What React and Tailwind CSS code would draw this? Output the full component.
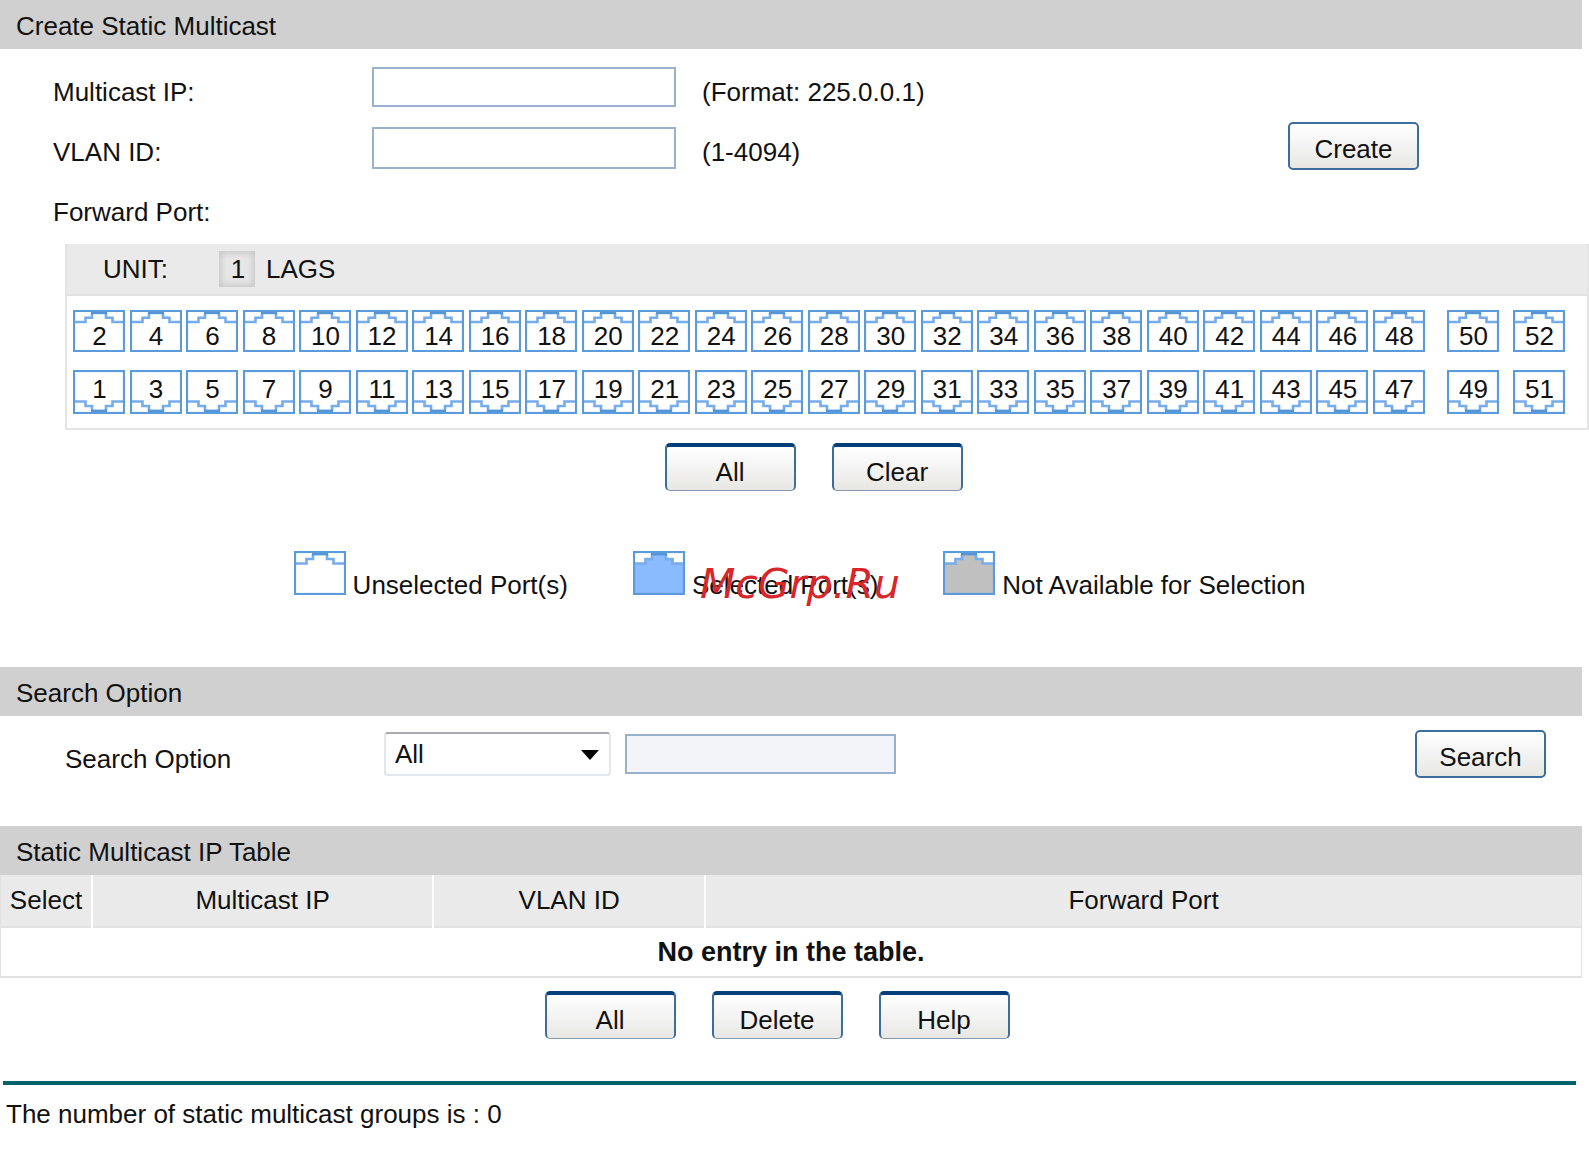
import React, { useState } from 'react';

const EVEN_PORTS = Array.from({ length: 24 }, (_, i) => (i + 1) * 2);
const ODD_PORTS = Array.from({ length: 24 }, (_, i) => i * 2 + 1);

const PORT_FILL = {
  unselected: '#ffffff',
  selected: '#8abaff',
  disabled: '#c0c0c0',
};

const PortShape = ({ state = 'unselected', flipped = false, className = '' }) => (
  <svg
    viewBox="0 0 52 44"
    preserveAspectRatio="none"
    aria-hidden="true"
    className={`${className} ${flipped ? '-scale-y-100' : ''}`}
  >
    <rect x="1" y="1" width="50" height="42" fill="#ffffff" />
    <path d="M1 12H12V8H19V3H33V8H40V12H51V43H1Z" fill={PORT_FILL[state]} />
    <path d="M2 12.5H12.5V8H19V3M50 12.5H39.5V8H33V3" fill="none" stroke="#76acea" strokeWidth="2.6" />
    <rect x="18" y="1" width="16" height="3.4" fill="#5495d6" />
    <rect x="1" y="1" width="50" height="42" fill="none" stroke="#5b9bdb" strokeWidth="2.2" />
  </svg>
);

const Port = ({ number, bottom, selected, onToggle, className = '' }) => (
  <button
    type="button"
    aria-pressed={selected}
    onClick={() => onToggle(number)}
    className={`relative flex w-[52px] shrink-0 justify-center pl-[1px] leading-[30px] ${
      bottom ? 'h-[44px] items-start pt-[4px]' : 'h-[42px] items-end pb-[1px]'
    } ${className}`}
  >
    <PortShape
      state={selected ? 'selected' : 'unselected'}
      flipped={bottom}
      className="absolute inset-0 h-full w-full"
    />
    <span className="relative">{number}</span>
  </button>
);

const PortRow = ({ ports, uplinks, bottom, selectedPorts, onToggle }) => (
  <div className="flex">
    <div className="flex flex-1 justify-between">
      {ports.map((n) => (
        <Port key={n} number={n} bottom={bottom} selected={selectedPorts.includes(n)} onToggle={onToggle} />
      ))}
    </div>
    <Port
      number={uplinks[0]}
      bottom={bottom}
      selected={selectedPorts.includes(uplinks[0])}
      onToggle={onToggle}
      className="ml-[22px]"
    />
    <Port
      number={uplinks[1]}
      bottom={bottom}
      selected={selectedPorts.includes(uplinks[1])}
      onToggle={onToggle}
      className="ml-[14px]"
    />
  </div>
);

const SectionTitle = ({ children }) => (
  <h2 className="mr-[7px] bg-[#d0d0d0] pt-[3px] pl-[16px] text-[26px] leading-[46px]">{children}</h2>
);

const BUTTON_BASE =
  'flex h-[48px] w-[131px] items-center justify-center rounded-[5px] bg-linear-to-b from-white via-[#f3f3f3] to-[#e8e7e3] pt-[6px] leading-[30px]';

const FormButton = ({ children, className = '', ...props }) => (
  <button type="button" className={`${BUTTON_BASE} border-2 border-[#3c6d9c] ${className}`} {...props}>
    {children}
  </button>
);

const BarButton = ({ children, ...props }) => (
  <button
    type="button"
    className={`${BUTTON_BASE} border-2 border-t-4 border-b border-[#3c6d9c] border-t-[#053f7a] border-b-[#8299af]`}
    {...props}
  >
    {children}
  </button>
);

const LegendItem = ({ state, children }) => (
  <div className="flex items-end gap-[7px]">
    <PortShape state={state} className="mb-[5px] h-[44px] w-[52px]" />
    <span className="relative whitespace-nowrap leading-[30px]">{children}</span>
  </div>
);

const App = () => {
  const [multicastIp, setMulticastIp] = useState('');
  const [vlanId, setVlanId] = useState('');
  const [selectedPorts, setSelectedPorts] = useState([]);
  const [searchOption, setSearchOption] = useState('all');

  const togglePort = (n) => {
    setSelectedPorts((prev) => (prev.includes(n) ? prev.filter((p) => p !== n) : [...prev, n]));
  };

  const selectAll = () => {
    setSelectedPorts(Array.from({ length: 52 }, (_, i) => i + 1));
  };

  return (
    <main className="min-h-screen bg-white font-['Liberation_Sans',Arial,sans-serif] text-[26px] text-[#111111]">
      <SectionTitle>Create Static Multicast</SectionTitle>

      <form className="pt-[13px]" onSubmit={(e) => e.preventDefault()}>
        <div className="flex h-[60px] items-start pl-[53px]">
          <label htmlFor="multicast-ip" className="w-[319px] leading-[60px]">Multicast IP:</label>
          <input
            id="multicast-ip"
            type="text"
            value={multicastIp}
            onChange={(e) => setMulticastIp(e.target.value)}
            className="mt-[5px] h-[40px] w-[304px] border-2 border-[#98b2cb] bg-white px-2"
          />
          <span className="ml-[26px] leading-[60px]">(Format: 225.0.0.1)</span>
        </div>
        <div className="flex h-[60px] items-start pl-[53px]">
          <label htmlFor="vlan-id" className="w-[319px] leading-[60px]">VLAN ID:</label>
          <input
            id="vlan-id"
            type="text"
            value={vlanId}
            onChange={(e) => setVlanId(e.target.value)}
            className="mt-[5px] h-[42px] w-[304px] border-2 border-[#98b2cb] bg-white px-2"
          />
          <span className="ml-[26px] leading-[60px]">(1-4094)</span>
          <FormButton className="mr-[170px] ml-auto">Create</FormButton>
        </div>
        <div className="pl-[53px] leading-[60px]">Forward Port:</div>

        {/* Port panel */}
        <div className="mt-[2px] ml-[65px] border-x-2 border-b-2 border-[#e4e4e4]">
          <div className="flex h-[52px] items-center border-b-2 border-[#e2e2e2] bg-[#eaeaea] pl-[36px]">
            <span>UNIT:</span>
            <button
              type="button"
              className="ml-[51px] h-[36px] w-[36px] bg-[#e6e6e6] pl-[2px] leading-[36px] shadow-[inset_0_0_6px_2px_#c6c6c6]"
            >
              1
            </button>
            <button type="button" className="ml-[11px]">LAGS</button>
          </div>
          <div className="flex flex-col gap-[18px] pt-[14px] pr-[22px] pb-[14px] pl-[6px]">
            <PortRow ports={EVEN_PORTS} uplinks={[50, 52]} selectedPorts={selectedPorts} onToggle={togglePort} />
            <PortRow ports={ODD_PORTS} uplinks={[49, 51]} bottom selectedPorts={selectedPorts} onToggle={togglePort} />
          </div>
        </div>

        <div className="mt-[13px] flex justify-center gap-[36px] pl-[38px]">
          <BarButton onClick={selectAll}>All</BarButton>
          <BarButton onClick={() => setSelectedPorts([])}>Clear</BarButton>
        </div>
      </form>

      {/* Legend */}
      <div className="mt-[60px] flex justify-center gap-[65px] pl-[10px]">
        <LegendItem state="unselected">Unselected Port(s)</LegendItem>
        <LegendItem state="selected">
          Selected Port(s)
          <span className="absolute top-[-8px] left-[8px] font-['DejaVu_Sans',sans-serif] text-[41px] leading-[44px] text-[#d9262a] italic">
            McGrp.Ru
          </span>
        </LegendItem>
        <LegendItem state="disabled">Not Available for Selection</LegendItem>
      </div>

      <div className="mt-[67px]">
        <SectionTitle>Search Option</SectionTitle>
      </div>
      <form className="flex items-start pt-[14px] pl-[65px]" onSubmit={(e) => e.preventDefault()}>
        <label htmlFor="search-option" className="w-[319px] pt-[14px] leading-[30px]">Search Option</label>
        <div className="relative mt-[2px]">
          <select
            id="search-option"
            value={searchOption}
            onChange={(e) => setSearchOption(e.target.value)}
            className="h-[44px] w-[227px] appearance-none rounded-[4px] border-2 border-[#e3e6ec] border-t-[#a9abb0] bg-white pt-[1px] pl-[9px]"
          >
            <option value="all">All</option>
            <option value="ip">Multicast IP</option>
            <option value="vlan">VLAN ID</option>
            <option value="port">Forward Port</option>
          </select>
          <svg viewBox="0 0 18 10" aria-hidden="true" className="pointer-events-none absolute top-[18px] right-[12px] h-[10px] w-[18px]">
            <path d="M0 0H18L9 10Z" fill="#000000" />
          </svg>
        </div>
        <input
          type="text"
          aria-label="Search value"
          disabled={searchOption === 'all'}
          className="mt-[4px] ml-[14px] h-[40px] w-[271px] border-2 border-[#98b2cb] bg-[#f3f4fa] px-2"
        />
        <FormButton className="mr-[43px] ml-auto">Search</FormButton>
      </form>

      <div className="mt-[48px]">
        <SectionTitle>Static Multicast IP Table</SectionTitle>
      </div>
      <div className="mr-[7px] border-x border-b-2 border-[#e2e2e2]">
        <table className="w-full table-fixed border-collapse">
          <thead>
            <tr className="h-[52px] border-b-2 border-[#e2e2e2] bg-[#eaeaea]">
              <th className="w-[91px] border-r-2 border-r-white p-0 font-normal">Select</th>
              <th className="w-[21.6%] border-r-2 border-r-white p-0 font-normal">Multicast IP</th>
              <th className="w-[17.2%] border-r-2 border-r-white p-0 font-normal">VLAN ID</th>
              <th className="p-0 font-normal">Forward Port</th>
            </tr>
          </thead>
          <tbody>
            <tr className="h-[49px]">
              <td colSpan={4} className="p-0 text-center text-[27px] leading-[30px] font-bold">No entry in the table.</td>
            </tr>
          </tbody>
        </table>
      </div>

      <div className="mt-[13px] flex justify-center gap-[36px] pr-[35px]">
        <BarButton>All</BarButton>
        <BarButton>Delete</BarButton>
        <BarButton>Help</BarButton>
      </div>

      <hr className="mt-[42px] mr-[13px] ml-[3px] border-t-4 border-[#00626b]" />
      <p className="mt-[14px] pl-[6px] leading-[30px]">The number of static multicast groups is : 0</p>
    </main>
  );
};

export default App;
